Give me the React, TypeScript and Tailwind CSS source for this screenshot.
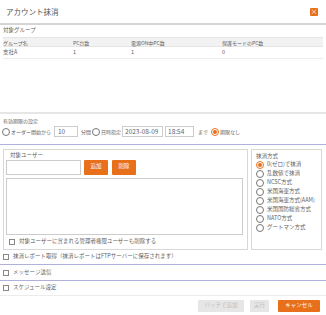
import React from "react";

const font = { fontFamily: '"Noto Sans CJK JP", "Noto Sans", sans-serif' };

function Radio({ checked = false }: { checked?: boolean }) {
  return (
    <span
      className={`inline-flex h-[8px] w-[8px] shrink-0 items-center justify-center rounded-full border ${
        checked ? "border-[#e8701a]" : "border-[#777]"
      } bg-white`}
    >
      {checked && <span className="h-[4px] w-[4px] rounded-full bg-[#e8701a]" />}
    </span>
  );
}

function Check() {
  return <span className="inline-block h-[6px] w-[6px] shrink-0 border border-[#888] bg-white" />;
}

const methods = [
  "0(ゼロ)で抹消",
  "乱数値で抹消",
  "NCSC方式",
  "米国海軍方式",
  "米国海軍方式(AAM)",
  "米国国防総省方式",
  "NATO方式",
  "グートマン方式",
];

export default function App() {
  return (
    <div className="flex h-[315px] w-[326px] flex-col overflow-hidden bg-white text-[5.5px] leading-none text-[#5f5f5f]" style={font}>
      <div className="flex h-[23px] items-center justify-between pl-[6px] pr-[8px]">
        <span className="text-[7.5px] text-[#555]">アカウント抹消</span>
        <span className="flex h-[8px] w-[8px] items-center justify-center rounded-[1px] bg-[#e8701a] text-[7px] leading-none text-white">
          ×
        </span>
      </div>
      <div className="h-[2px] bg-[#d4d4d4]" />

      <div className="px-[3px]">
        <div className="flex h-[12px] items-center">対象グループ</div>
        <div className="grid h-[10px] grid-cols-[70px_58px_91px_1fr] items-center border-y border-[#e4e4e4] bg-[#f2f2f2] text-[5px]">
          <span>グループ名</span>
          <span>PC台数</span>
          <span>電源ON中PC数</span>
          <span>保護モードのPC数</span>
        </div>
        <div className="grid h-[12px] grid-cols-[70px_58px_91px_1fr] items-center border-b border-[#ececec]">
          <span>支社A</span>
          <span>1</span>
          <span>1</span>
          <span>0</span>
        </div>
      </div>

      <div className="mt-[53px] h-[2px] bg-[#e6e6e6]" />

      <div className="px-[2px] pt-[3px] text-[5px]">
        <div className="flex h-[7px] items-center pl-px">有効期限の設定</div>
        <div className="mt-[2px] flex h-[11px] items-center">
          <Radio />
          <span className="ml-[1px]">オーダー開始から</span>
          <span className="ml-[3px] flex h-[11px] w-[24px] items-center border border-[#ccc] px-[3px] text-[6.5px]">10</span>
          <span className="ml-[3px]">分間</span>
          <span className="ml-[1px]" />
          <Radio />
          <span className="ml-[1px]">日時指定</span>
          <span className="ml-[1px] flex h-[11px] w-[41px] items-center border border-[#ccc] px-[2px] text-[6.5px]">2023-08-09</span>
          <span className="ml-[2px] flex h-[11px] w-[29px] items-center border border-[#ccc] px-[2px] text-[6.5px]">18:54</span>
          <span className="ml-[4px]">まで</span>
          <span className="ml-[3px]" />
          <Radio checked />
          <span className="ml-[1px]">期限なし</span>
        </div>
      </div>

      <div className="mt-[7px] h-px bg-[#b0b0dc]" />

      <div className="flex gap-[3px] pl-[3px] pr-[4px] pt-[4px]">
        <div className="flex h-[101px] w-[245px] flex-col border border-[#d8d8d8] px-[2px] pt-[3px]">
          <div className="pl-[4px]">対象ユーザー</div>
          <div className="mt-[1px] flex items-center gap-[3px]">
            <span className="h-[15px] w-[75px] border border-[#ccc]" />
            <span className="flex h-[15px] w-[24px] items-center justify-center rounded-[1px] bg-[#e8701a] text-white">追加</span>
            <span className="ml-[1px] flex h-[15px] w-[24px] items-center justify-center rounded-[1px] bg-[#e8701a] text-white">削除</span>
          </div>
          <div className="mt-[3px] h-[57px] w-[237px] border border-[#ccc]" />
          <div className="mt-[4px] flex items-center gap-[4px] pl-[3px]">
            <Check />
            <span>対象ユーザーに含まれる管理者権限ユーザーも削除する</span>
          </div>
        </div>
        <div className="flex h-[101px] flex-1 flex-col border border-[#d8d8d8] pl-[4px] pt-[4px]">
          <div className="mb-[1px]">抹消方式</div>
          {methods.map((m, i) => (
            <div key={m} className="flex h-[9px] items-center gap-[3px] whitespace-nowrap">
              <Radio checked={i === 0} />
              <span>{m}</span>
            </div>
          ))}
        </div>
      </div>

      <div className="flex h-[13px] items-center gap-[4px] overflow-hidden whitespace-nowrap px-[3px] pt-[1px]">
        <Check />
        <span>抹消レポート取得（抹消レポートはFTPサーバーに保存されます）</span>
      </div>
      <div className="mt-[1px] h-px bg-[#b0b0dc]" />
      <div className="flex h-[15px] items-center gap-[4px] px-[3px]">
        <Check />
        <span>メッセージ送信</span>
      </div>
      <div className="h-px bg-[#b0b0dc]" />
      <div className="flex h-[14px] items-center gap-[4px] px-[3px]">
        <Check />
        <span>スケジュール設定</span>
      </div>
      <div className="h-px bg-[#ececec]" />

      <div className="mt-[4px] flex items-center justify-end pr-[6px]">
        <span className="flex h-[12px] w-[46px] items-center justify-center bg-[#e6e6e6] text-[#c0c0c0]">バッチで追加</span>
        <span className="ml-[6px] flex h-[12px] w-[19px] items-center justify-center bg-[#e6e6e6] text-[#c0c0c0]">実行</span>
        <span className="ml-[9px] flex h-[12px] w-[42px] items-center justify-center rounded-[1px] bg-[#e8701a] text-white">キャンセル</span>
      </div>
    </div>
  );
}
